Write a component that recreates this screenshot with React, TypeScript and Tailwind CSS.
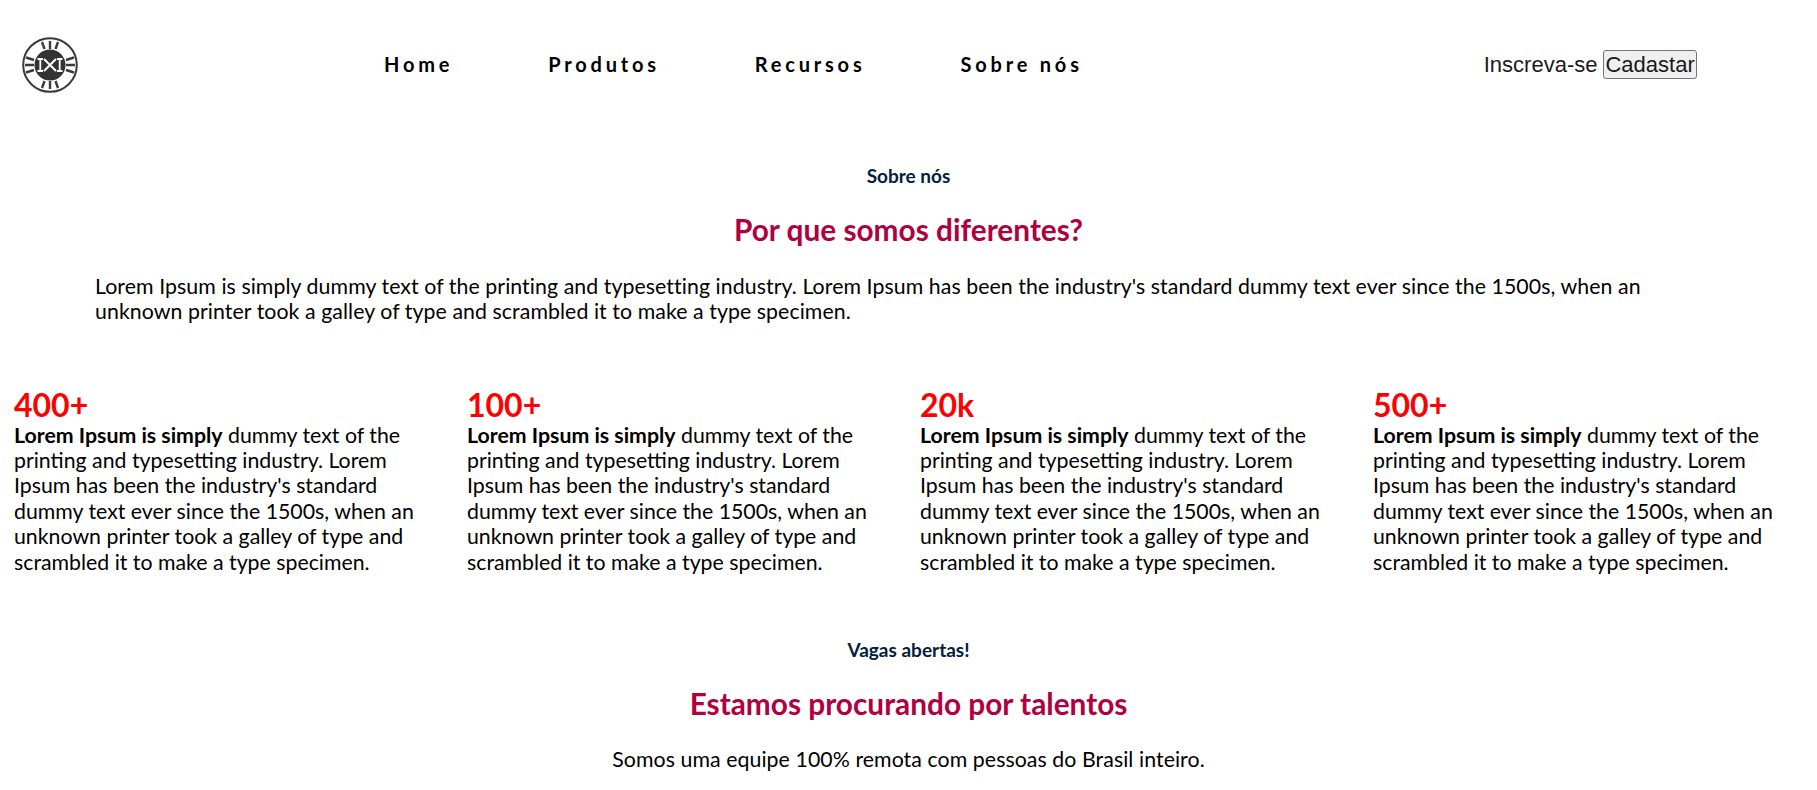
const font = "font-['Lato','Noto_Sans',sans-serif]";
const nav = ["Home", "Produtos", "Recursos", "Sobre nós"];
const Logo = () => (
  <svg width="58" height="58" viewBox="0 0 58 58" className="shrink-0">
    <circle cx="29" cy="29" r="26.8" fill="none" stroke="#3a3a3a" strokeWidth="2" />
    <circle cx="29" cy="29" r="15.5" fill="#333" />
    <g stroke="#3a3a3a" strokeWidth="2.4">
      <path d="M21 6 L23.5 13 M29 5 L29 13 M37 6 L34.5 13" />
      <path d="M21 52 L23.5 45 M29 53 L29 45 M37 52 L34.5 45" />
      <path d="M5 21.5 L13 24 M4 29 L13 29 M5 36.5 L13 34" />
      <path d="M53 21.5 L45 24 M54 29 L45 29 M53 36.5 L45 34" />
    </g>
    <g stroke="#fff" fill="none">
      <path d="M16.5 23H22M16.5 35H22M19.3 23V35" strokeWidth="1.8" />
      <path d="M23 23L35 35M35 23L23 35" strokeWidth="2" />
      <path d="M36 23H41.5M36 35H41.5M38.7 23V35" strokeWidth="1.8" />
    </g>
  </svg>
);
const Stat = ({ n }: { n: string }) => (
  <div>
    <div className="text-[32px] leading-[32px] font-bold text-[#ff0000]">{n}</div>
    <p className="mt-[2px] text-[21.3px] leading-[25.4px] text-black"><b>Lorem Ipsum is simply</b> dummy text of the printing and typesetting industry. Lorem Ipsum has been the industry's standard dummy text ever since the 1500s, when an unknown printer took a galley of type and scrambled it to make a type specimen.</p>
  </div>
);
export default function App() {
  return (
    <div className={`${font} bg-white w-[1817px] h-[790px] overflow-hidden`}>
      <header className="flex items-center h-[130px] pl-[21px]">
        <Logo />
        <nav className="flex ml-[305px] -mt-[2px] gap-[95px] text-[20px] font-bold tracking-[3.8px] text-black">
          {nav.map((n) => <a key={n}>{n}</a>)}
        </nav>
        <div className="ml-[401px] -mt-[1px] flex items-center gap-[6px] font-['Liberation_Sans',sans-serif] text-[22px] text-[#1a1a1a]">
          <span>Inscreva-se</span>
          <button className="bg-[#efefef] border border-[#767676] rounded-[3px] leading-[27px] px-[1px]">Cadastar</button>
        </div>
      </header>
      <section className="flex flex-col items-center pt-[35px]">
        <h3 className="text-[19px] leading-[22px] font-bold text-[#02203f]">Sobre nós</h3>
        <h2 className="mt-[25px] text-[29.8px] leading-[36px] font-bold text-[#b00040]">Por que somos diferentes?</h2>
        <p className="mt-[26px] self-start ml-[95px] w-[1610px] text-[21.3px] leading-[25.3px] tracking-[0.07px] text-black">Lorem Ipsum is simply dummy text of the printing and typesetting industry. Lorem Ipsum has been the industry's standard dummy text ever since the 1500s, when an unknown printer took a galley of type and scrambled it to make a type specimen.</p>
      </section>
      <section className="grid grid-cols-[repeat(4,410px)] gap-[43px] mt-[64px] pl-[14px]">
        {["400+", "100+", "20k", "500+"].map((n) => <Stat key={n} n={n} />)}
      </section>
      <section className="flex flex-col items-center mt-[64px]">
        <h3 className="text-[19px] leading-[22px] font-bold text-[#02203f]">Vagas abertas!</h3>
        <h2 className="mt-[25px] text-[29.8px] leading-[36px] font-bold text-[#b00040]">Estamos procurando por talentos</h2>
        <p className="mt-[25px] text-[21.3px] leading-[25px] tracking-[0.07px] text-black">Somos uma equipe 100% remota com pessoas do Brasil inteiro.</p>
      </section>
    </div>
  );
}
